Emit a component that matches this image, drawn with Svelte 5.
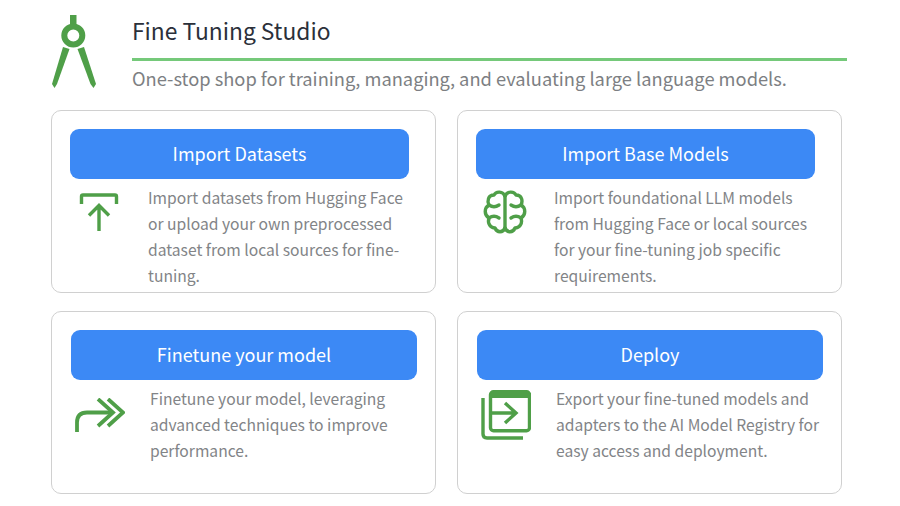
<script>
    const cards = [
        {
            title: "Import Datasets",
            kind: "upload",
            text: "Import datasets from Hugging Face or upload your own preprocessed dataset from local sources for fine-tuning.",
        },
        {
            title: "Import Base Models",
            kind: "brain",
            text: "Import foundational LLM models from Hugging Face or local sources for your fine-tuning job specific requirements.",
        },
        {
            title: "Finetune your model",
            kind: "forward",
            text: "Finetune your model, leveraging advanced techniques to improve performance.",
        },
        {
            title: "Deploy",
            kind: "deploy",
            text: "Export your fine-tuned models and adapters to the AI Model Registry for easy access and deployment.",
        },
    ];
</script>

<div class="page">
    <header class="head">
        <svg class="logo" viewBox="0 0 48 74" width="48" height="74">
            <path d="M19 0h6.500v10h-6.500z" fill="#4f9f48" />
            <circle cx="22.300" cy="20.500" r="9" fill="none" stroke="#4f9f48" stroke-width="6" />
            <path d="M12 32 L18.500 34 L6 69 L3.500 73 L1 69 Z" fill="#4f9f48" />
            <path d="M33 32 L26.500 34 L39.500 69 L42.500 73 L45 69 Z" fill="#4f9f48" />
        </svg>
        <div class="head-text">
            <h1>Fine Tuning Studio</h1>
            <p>One-stop shop for training, managing, and evaluating large language models.</p>
        </div>
    </header>

    <div class="grid">
        {#each cards as card, i}
            <section class="card" class:low={i > 1}>
                <div class="btn">{card.title}</div>
                <div class="body">
                    <div class="icon {card.kind}">
                        {#if card.kind === "upload"}
                            <svg viewBox="0 0 40 40" width="40" height="40" fill="none" stroke="#4f9f48" stroke-width="3.400">
                                <path d="M2.500 12V4.500Q2.500 3 4 3H36Q37.500 3 37.500 4.500V12" />
                                <path d="M20 39V14M10 23.500L20 13.500L30 23.500" />
                            </svg>
                        {:else if card.kind === "brain"}
                            <svg viewBox="0 0 44 44" width="44" height="44" fill="none" stroke="#4f9f48" stroke-width="3.400" stroke-linecap="round" stroke-linejoin="round">
                                <path d="M22 6V38" />
                                <path d="M22 6C20 1 13 1 11 5C5 5 4 11 6 15C1 18 1 25 6 28C4 34 8 38 12 38C14 43 20 43 22 38" />
                                <path d="M22 6C24 1 31 1 33 5C39 5 40 11 38 15C43 18 43 25 38 28C40 34 36 38 32 38C30 43 24 43 22 38" />
                                <path d="M6 15C9 17 13 17 16 15M6 28C9 26 13 26 16 28" />
                                <path d="M38 15C35 17 31 17 28 15M38 28C35 26 31 26 28 28" />
                            </svg>
                        {:else if card.kind === "forward"}
                            <svg viewBox="0 0 50 36" width="50" height="36" fill="none" stroke="#4f9f48" stroke-width="3.800">
                                <path d="M2 34V24.500Q2 14.500 12 14.500H38" />
                                <path d="M23 1L38 14.500L23 28" />
                                <path d="M33 1L48 14.500L33 28" />
                            </svg>
                        {:else}
                            <svg viewBox="0 0 50 50" width="50" height="50" fill="none" stroke="#4f9f48" stroke-width="3.400">
                                <path d="M2 8V44Q2 48 6 48H42" />
                                <rect x="9.500" y="1.700" width="39" height="39" rx="3" />
                                <path d="M9.500 5H48.500" stroke-width="6" />
                                <path d="M8 23H35M24 13L35 23L24 33" />
                            </svg>
                        {/if}
                    </div>
                    <p>{card.text}</p>
                </div>
            </section>
        {/each}
    </div>
</div>

<style>
    :global(body) {
        margin: 0;
        background: #fff;
    }
    .page {
        width: 900px;
        height: 506px;
        box-sizing: border-box;
        padding: 15px 53px 0 51px;
        font-family: "Noto Sans CJK SC", "Noto Sans", sans-serif;
        overflow: hidden;
    }
    .head {
        display: flex;
        height: 95px;
    }
    .logo {
        flex: none;
        margin-right: 33px;
    }
    .head-text {
        flex: 1;
    }
    h1 {
        margin: 0;
        height: 46px;
        box-sizing: border-box;
        border-bottom: 3px solid #75c97a;
        font-size: 22.800px;
        line-height: 31px;
        font-weight: 400;
        color: #2b303a;
    }
    .head-text p {
        margin: 2px 0 0;
        font-size: 18.300px;
        line-height: 30px;
        color: #7d7f83;
    }
    .grid {
        display: grid;
        grid-template-columns: 385px 385px;
        grid-auto-rows: 183px;
        column-gap: 21px;
        row-gap: 18px;
    }
    .card {
        box-sizing: border-box;
        border: 1px solid #d0d0d0;
        border-radius: 10px;
        padding: 18px 26px 0 18px;
    }
    .card.low {
        padding: 18px 18px 0 19px;
    }
    .btn {
        height: 50px;
        border-radius: 9px;
        background: #3c89f5;
        color: #fff;
        font-size: 18px;
        line-height: 48px;
        text-align: center;
    }
    .body {
        display: flex;
        margin-top: 6px;
    }
    .icon {
        flex: none;
        width: 78px;
        height: 50px;
        padding: 7px 0 0 9px;
        box-sizing: border-box;
    }
    .low .icon {
        width: 79px;
    }
    .icon.brain {
        padding: 5px 0 0 7px;
    }
    .icon.forward {
        padding: 12px 0 0 4px;
    }
    .icon.deploy {
        padding: 4px 0 0 4px;
    }
    .body p {
        margin: 0;
        font-size: 15.650px;
        line-height: 26px;
        color: #828487;
    }
</style>
